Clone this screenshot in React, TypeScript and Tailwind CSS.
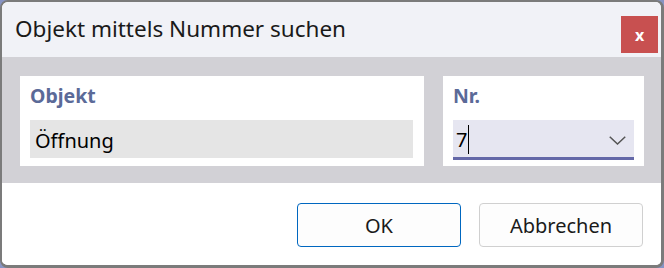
export default function App() {
  return (
    <div className="w-[664px] h-[268px] bg-[#8894c4]" style={{ fontFamily: '"Noto Sans", "Open Sans", sans-serif' }}>
      <div className="w-[664px] h-[268px] flex flex-col overflow-hidden rounded-[8px] border-2 border-r-[3px] border-b-[3px] border-[#7b7b7b] bg-white">
        {/* Titelleiste */}
        <div className="h-[55px] shrink-0 bg-[#f1f2f7] flex items-center justify-between pl-[13px] pr-[3px]">
          <span className="text-[22.5px] text-[#1a1a1a] leading-none">Objekt mittels Nummer suchen</span>
          <button
            type="button"
            className="mt-[14px] self-start w-[37px] h-[37px] bg-[#c85050] text-white flex items-center justify-center text-[16px] font-bold leading-none"
          >
            x
          </button>
        </div>

        {/* Eingabebereich */}
        <div className="h-[126px] shrink-0 bg-[#d2d1d6] flex gap-[19px] pl-[18px] pr-[17px] pt-[19px]">
          <div className="w-[404px] h-[90px] bg-white pl-[10px] pr-[11px] pt-[6px]">
            <div className="h-[38px] text-[19.5px] font-bold text-[#5b6a98] leading-[28px]">Objekt</div>
            <div className="h-[38px] bg-[#e5e5e5] flex items-center pl-[5px] pt-[3px] text-[20px] text-black">Öffnung</div>
          </div>
          <div className="w-[201px] h-[90px] bg-white px-[10px] pt-[6px]">
            <div className="h-[38px] text-[19.5px] font-bold text-[#5b6a98] leading-[28px]">Nr.</div>
            <div className="h-[40px] bg-[#e6e6f1] border-b-[3px] border-[#6468a8] flex items-center justify-between pl-[3px] pr-[8px]">
              <div className="flex items-center text-[20px] text-black pt-[2px]">
                7<span className="ml-[1px] w-px h-[29px] bg-black" />
              </div>
              <svg width="17" height="9" viewBox="0 0 17 9" className="mt-[3px]">
                <polyline points="0.75,0.75 8.5,8 16.25,0.75" fill="none" stroke="#555" strokeWidth="1.5" />
              </svg>
            </div>
          </div>
        </div>

        {/* Schaltflächen */}
        <div className="flex-1 bg-white flex justify-end items-start gap-[18px] pt-[20px] pr-[18px]">
          <button
            type="button"
            className="w-[164px] h-[44px] rounded-[4px] border border-[#0067c0] bg-[#fdfdfd] pt-[2px] text-[20px] text-[#1a1a1a]"
          >
            OK
          </button>
          <button
            type="button"
            className="w-[164px] h-[44px] rounded-[4px] border border-[#d0d0d0] bg-[#fdfdfd] pt-[2px] text-[20px] text-[#1a1a1a]"
          >
            Abbrechen
          </button>
        </div>
      </div>
    </div>
  );
}
